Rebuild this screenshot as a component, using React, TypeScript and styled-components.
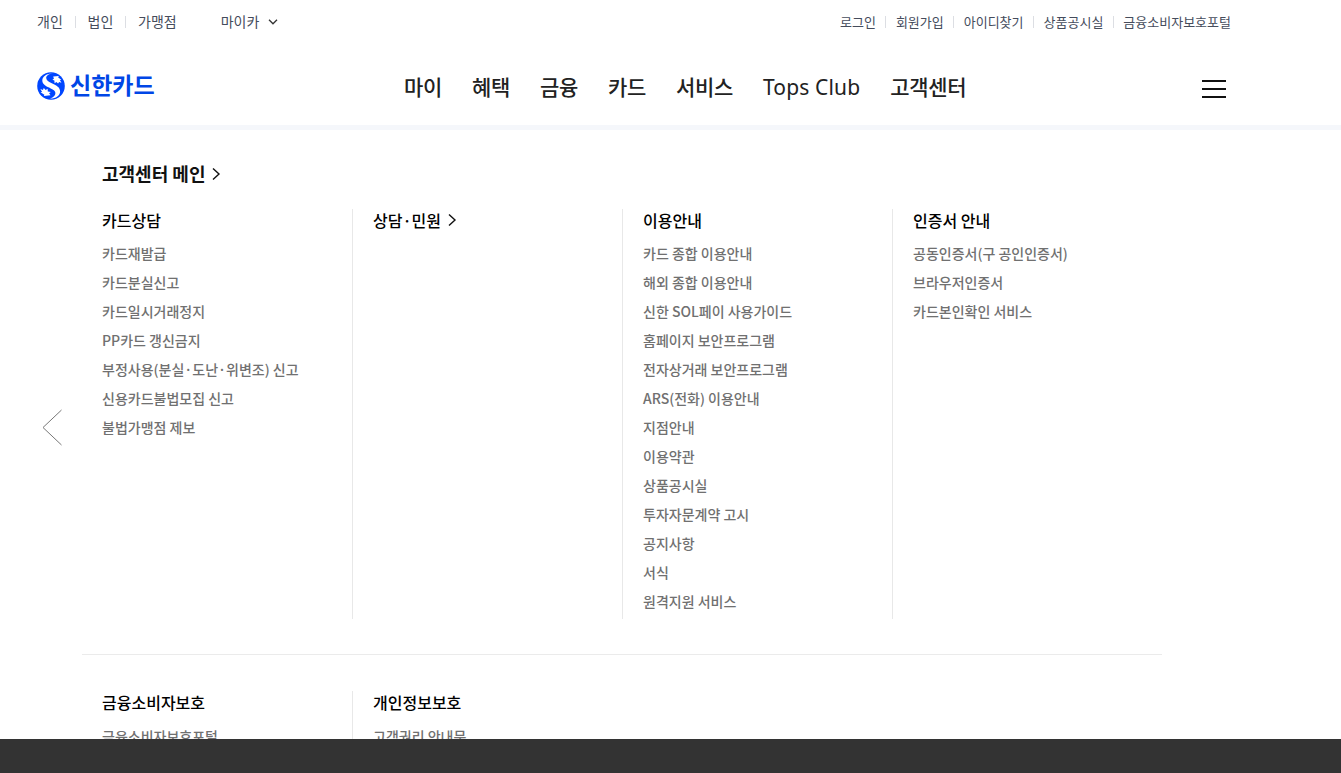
import React from 'react';
import styled, { createGlobalStyle } from 'styled-components';

const GlobalStyle = createGlobalStyle`
  * { box-sizing: border-box; }
  html, body { margin: 0; padding: 0; overflow: hidden; }
  body {
    background: #fff;
    font-family: 'Noto Sans CJK KR', 'Noto Sans', sans-serif;
    color: #111;
  }
  ul { list-style: none; margin: 0; padding: 0; }
  a { color: inherit; text-decoration: none; white-space: nowrap; }
`;

const Page = styled.div`
  height: 773px;
  display: flex;
  flex-direction: column;
  overflow: hidden;
`;

const Header = styled.header`
  flex: none;
  height: 130px;
  border-bottom: 5px solid #f5f7fb;
`;

const UtilityBar = styled.div`
  display: flex;
  align-items: center;
  height: 44px;
  padding: 0 110px 0 37px;
`;

const UtilityList = styled.ul<{ $size: number; $gap: number; $lift?: number }>`
  display: flex;
  align-items: center;
  font-size: ${(p) => p.$size}px;
  line-height: 20px;
  color: #454c5c;
  li { display: flex; align-items: center; }
  a { padding-bottom: ${(p) => p.$lift ?? 0}px; }
  li + li::before {
    content: '';
    width: 1px;
    height: 12px;
    margin: 0 ${(p) => p.$gap}px;
    background: #dcdee3;
  }
`;

const MyCar = styled.a`
  display: flex;
  align-items: center;
  gap: 9px;
  margin: 0 auto 0 44px;
  font-size: 14px;
  line-height: 20px;
  color: #454c5c;
  span { padding-bottom: 2px; }
`;

const MainBar = styled.div`
  display: flex;
  align-items: center;
  height: 84px;
  padding: 0 115px 0 37px;
`;

const Logo = styled.a`
  display: flex;
  align-items: center;
  gap: 5px;
  width: 367px;
  height: 28px;
  color: #0046e6;
  font-size: 23px;
  line-height: 28px;
  font-weight: 700;
  span { padding-bottom: 4px; }
`;

const Nav = styled.nav`
  display: flex;
  gap: 30px;
  margin-right: auto;
  font-size: 21px;
  font-weight: 500;
  letter-spacing: -0.33px;
  line-height: 32px;
  color: #222;
`;

const LatinLink = styled.a`
  padding-top: 1px;
  font-family: 'Noto Sans', sans-serif;
  font-size: 21px;
  font-weight: 400;
  letter-spacing: 0.15px;
`;

const MenuButton = styled.button`
  display: flex;
  flex-direction: column;
  gap: 6px;
  width: 24px;
  padding: 5px 0 0;
  border: 0;
  background: none;
  span { height: 2px; background: #111; }
`;

const Content = styled.main`
  flex: 1;
  min-height: 0;
  overflow: hidden;
  display: flex;
`;

const PrevButton = styled.button`
  flex: none;
  width: 82px;
  height: 320px;
  padding: 278px 0 0 42px;
  border: 0;
  background: none;
  display: flex;
  align-items: flex-start;
  svg { display: block; }
`;

const Sitemap = styled.div`
  width: 1080px;
`;

const MainLink = styled.a`
  display: flex;
  align-items: center;
  gap: 7px;
  height: 28px;
  margin: 30px 0 21px 20px;
  font-size: 18px;
  font-weight: 700;
  color: #111;
  span { padding-bottom: 2px; }
`;

const ColumnTitle = styled.h3`
  display: flex;
  align-items: center;
  gap: 7px;
  margin: 0 0 7px;
  height: 23px;
  padding-bottom: 2px;
  font-size: 16px;
  font-weight: 500;
  color: #000;
`;

const Columns = styled.section`
  display: grid;
  grid-template-columns: repeat(4, 270px);
  min-height: 410px;
  & + & {
    margin-top: 35px;
    padding-top: 36px;
    border-top: 1px solid #ebebeb;
  }
  & + & ${ColumnTitle} { margin-bottom: 8px; }
`;

const Column = styled.div`
  padding-left: 20px;
  & + & { border-left: 1px solid #e8e8e8; }
`;

const Links = styled.ul`
  font-size: 14px;
  font-weight: 500;
  line-height: 29px;
  color: #707070;
`;

const Footer = styled.footer`
  flex: none;
  height: 34px;
  background: #333;
`;

const ChevronRight = () => (
  <svg width="9" height="14" viewBox="0 0 9 14" fill="none" stroke="#111" strokeWidth="1.4">
    <path d="M1 1.5 7 7 1 12.5" />
  </svg>
);

const Symbol = () => (
  <svg width="28" height="28" viewBox="0 0 28 28">
    <circle cx="14" cy="14" r="13.8" fill="#0046ff" />
    <path
      fill="#fff"
      d="M16 1.300C9.500 1.500 5.300 4.400 5.300 8.600c0 4.200 4.400 6 8.400 7.800 3 1.400 4.700 2.500 4.700 4.600 0 2.800-2.600 4.800-5.700 5.600 6 .2 10.400-2.800 10.400-7.100 0-4.100-3.600-6-7.800-7.900C11.600 9.800 9.200 8.500 9.200 6.100c0-2.600 3.200-4.300 6.800-4.800z"
    />
    <path fill="#fff" d="M16.200 4.500l5.600-.6-.6 1.500 3.200 2.400-1.500.2 1.500 2.800-2.300-.9-1 1.500-1.700-1.500-1.800 1.300-.2-2.700-2-.8 1.500-1z" />
    <path fill="#fff" d="M13.500 23.300l-6.600.8.500-1.400-3.900-2.500 1.600-.2-1.700-3.100 2.500 1.100.9-2 1.900 2.100 1.900-1.300.2 2.700 3 .5-1.700 1.300z" />
  </svg>
);

const personal = ['개인', '법인', '가맹점'];
const account = ['로그인', '회원가입', '아이디찾기', '상품공시실', '금융소비자보호포털'];
const nav = ['마이', '혜택', '금융', '카드', '서비스', 'Tops Club', '고객센터'];

type Group = { title: string; link?: boolean; items: string[] };

const groups: Group[][] = [
  [
    {
      title: '카드상담',
      items: ['카드재발급', '카드분실신고', '카드일시거래정지', 'PP카드 갱신금지', '부정사용(분실·도난·위변조) 신고', '신용카드불법모집 신고', '불법가맹점 제보'],
    },
    { title: '상담·민원', link: true, items: [] },
    {
      title: '이용안내',
      items: ['카드 종합 이용안내', '해외 종합 이용안내', '신한 SOL페이 사용가이드', '홈페이지 보안프로그램', '전자상거래 보안프로그램', 'ARS(전화) 이용안내', '지점안내', '이용약관', '상품공시실', '투자자문계약 고시', '공지사항', '서식', '원격지원 서비스'],
    },
    { title: '인증서 안내', items: ['공동인증서(구 공인인증서)', '브라우저인증서', '카드본인확인 서비스'] },
  ],
  [
    { title: '금융소비자보호', items: ['금융소비자보호포털'] },
    { title: '개인정보보호', items: ['고객권리 안내문'] },
  ],
];

export default function App() {
  return (
    <Page>
      <GlobalStyle />
      <Header>
        <UtilityBar>
          <UtilityList $size={14} $gap={11.9} $lift={2}>
            {personal.map((t) => <li key={t}><a href="#">{t}</a></li>)}
          </UtilityList>
          <MyCar href="#">
            <span>마이카</span>
            <svg width="10" height="6" viewBox="0 0 10 6" fill="none" stroke="#333" strokeWidth="1.3">
              <path d="M1 .8 5 4.800 9 .8" />
            </svg>
          </MyCar>
          <UtilityList $size={13} $gap={9.5}>
            {account.map((t) => <li key={t}><a href="#">{t}</a></li>)}
          </UtilityList>
        </UtilityBar>
        <MainBar>
          <Logo href="#"><Symbol /><span>신한카드</span></Logo>
          <Nav>
            {nav.map((t) => t === 'Tops Club'
              ? <LatinLink key={t} href="#">{t}</LatinLink>
              : <a key={t} href="#">{t}</a>)}
          </Nav>
          <MenuButton aria-label="전체메뉴"><span /><span /><span /></MenuButton>
        </MainBar>
      </Header>
      <Content>
        <PrevButton aria-label="이전">
          <svg width="20" height="38" viewBox="0 0 20 38" fill="none" stroke="#777" strokeWidth="1">
            <path d="M19.500 2 1 19.500 19.500 37" />
          </svg>
        </PrevButton>
        <Sitemap>
          <MainLink href="#"><span>고객센터 메인</span><ChevronRight /></MainLink>
          {groups.map((row, i) => (
            <Columns key={i}>
              {row.map((g) => (
                <Column key={g.title}>
                  <ColumnTitle>{g.title}{g.link && <ChevronRight />}</ColumnTitle>
                  <Links>
                    {g.items.map((t) => <li key={t}><a href="#">{t}</a></li>)}
                  </Links>
                </Column>
              ))}
            </Columns>
          ))}
        </Sitemap>
      </Content>
      <Footer />
    </Page>
  );
}
